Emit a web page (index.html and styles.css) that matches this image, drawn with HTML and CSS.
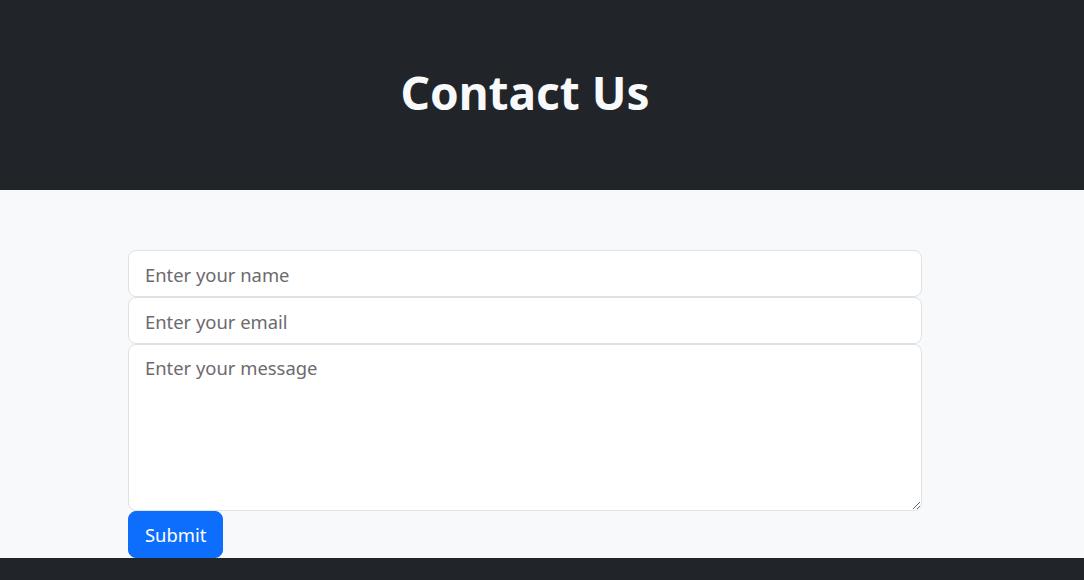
FILE: index.html
```html
<!DOCTYPE html>
<html lang="en">
<head>
<meta charset="utf-8">
<title>Contact Us</title>
<link rel="stylesheet" href="styles.css">
</head>
<body>
<header class="hero">
  <div class="wrap hero-inner">
    <h1 class="hero-title">Contact Us</h1>
  </div>
</header>
<main class="contact">
  <div class="wrap">
    <form class="contact-form">
      <input class="field" type="text" placeholder="Enter your name">
      <input class="field" type="email" placeholder="Enter your email">
      <textarea class="field field-area" placeholder="Enter your message"></textarea>
      <button class="submit" type="button">Submit</button>
    </form>
  </div>
</main>
<footer class="footer"></footer>
</body>
</html>
```
FILE: styles.css
```css
* { box-sizing: border-box; }
html, body { margin: 0; padding: 0; }
body {
  font-family: "Noto Sans", "Open Sans", sans-serif;
  background: #f8f9fa;
  color: #212529;
}
.wrap {
  width: 1050px;
  padding: 0 128px;
}
.hero {
  background: #212529;
  height: 190px;
}
.hero-inner {
  height: 100%;
  display: flex;
  align-items: center;
  justify-content: center;
}
.hero-title {
  margin: 0 0 4px;
  color: #f8f9fa;
  font-size: 46px;
  font-weight: 700;
  line-height: 1.2;
}
.contact {
  padding: 60px 0 0;
}
.contact-form {
  display: flex;
  flex-direction: column;
  align-items: flex-start;
}
.field {
  display: block;
  width: 100%;
  height: 47px;
  padding: 9px 16px 7px;
  font: inherit;
  font-size: 18.4px;
  line-height: 1.5;
  color: #212529;
  background: #fff;
  border: 1px solid #dee2e6;
  border-radius: 8px;
  outline: none;
}
.field::placeholder { color: #6c6a6e; opacity: 1; }
.field-area {
  height: 167px;
  resize: vertical;
}
.submit {
  height: 47px;
  padding: 8px 16px;
  font: inherit;
  font-size: 18.4px;
  line-height: 1.5;
  color: #fff;
  background: #0d6efd;
  border: 1px solid #0d6efd;
  border-radius: 8px;
  cursor: pointer;
}
.footer {
  background: #212529;
  height: 40px;
}
```
